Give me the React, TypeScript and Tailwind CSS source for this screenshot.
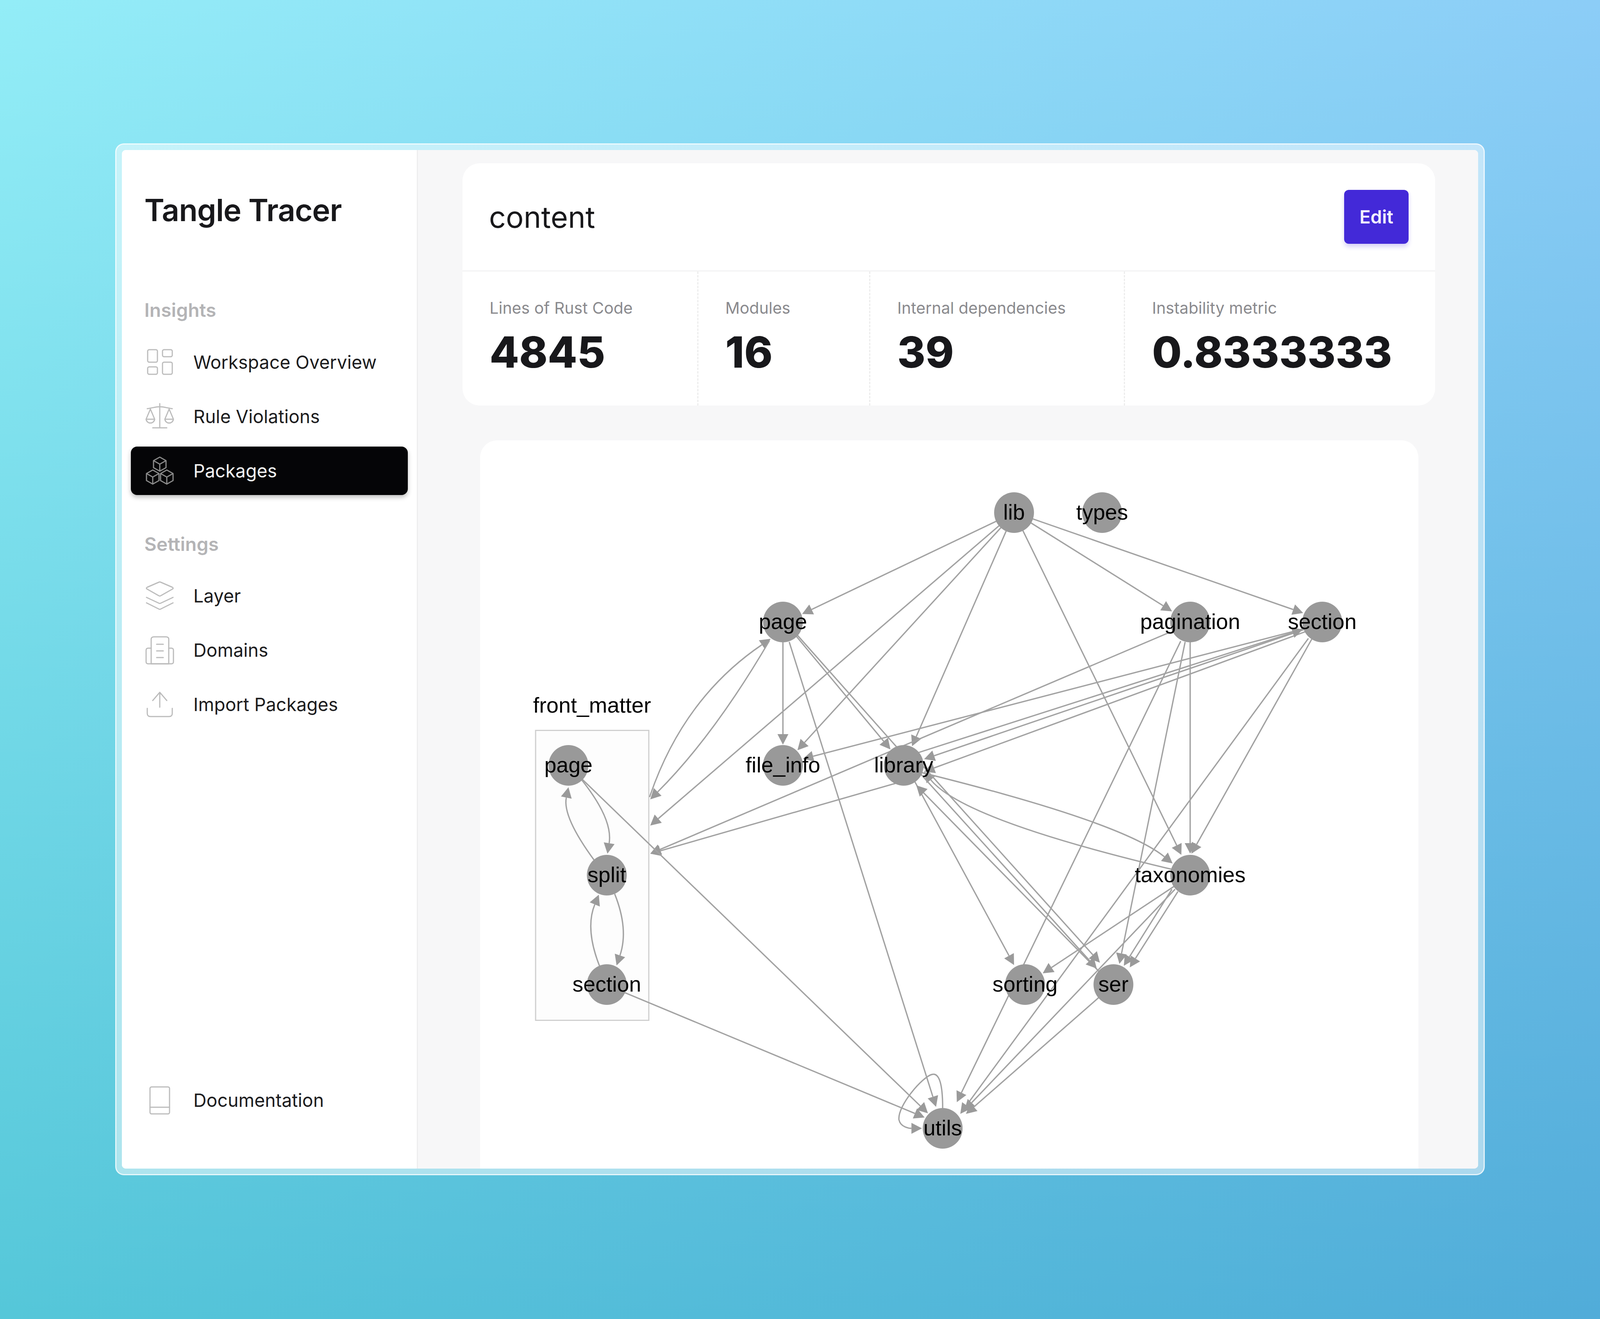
import React, { useState } from "react";

type EdgeDef = { p: number[]; arrow?: boolean };

const GRAY_LINE = "#a2a2a2";
const GRAY_HEAD = "#9a9a9a";

const edges: EdgeDef[] = [
  { p: [3170, 1332, 2538, 1575] },
  { p: [3180, 1341, 2064, 2113] },
  { p: [3182, 1348, 2528, 1924] },
  { p: [3196, 1359, 2896, 1911] },
  { p: [3249, 1358, 3753, 2188] },
  { p: [3268, 1335, 3732, 1569] },
  { p: [3273, 1326, 4151, 1572] },
  { p: [2486, 1644, 2486, 1907] },
  { p: [2528, 1628, 2832, 1922] },
  { p: [2530, 1624, 2850, 1914], arrow: false },
  { p: [2506, 1643, 2973, 2833] },
  { p: [2062, 2040, 2212, 1812, 2449, 1634] },
  { p: [2443, 1640, 2260, 1863, 2064, 2046] },
  { p: [2844, 2005, 2064, 2185] },
  { p: [3717, 1618, 2064, 2185] },
  { p: [4148, 1608, 2547, 1943] },
  { p: [4148, 1610, 2935, 1943] },
  { p: [4150, 1616, 2935, 1975] },
  { p: [2910, 1928, 4151, 1608] },
  { p: [4169, 1634, 3785, 2185] },
  { p: [4157, 1634, 3050, 2851] },
  { p: [3781, 1644, 3781, 2185] },
  { p: [3751, 1641, 3039, 2821] },
  { p: [3765, 1643, 3556, 2467] },
  { p: [3733, 2267, 3307, 2494] },
  { p: [3742, 2282, 3589, 2476] },
  { p: [3723, 2276, 3570, 2472] },
  { p: [3733, 2276, 3063, 2842] },
  { p: [3733, 2227, 3197, 2100, 2935, 1975] },
  { p: [2925, 1977, 3446, 2100, 3733, 2215] },
  { p: [2905, 2000, 3221, 2470] },
  { p: [3493, 2488, 2910, 2010] },
  { p: [2925, 1982, 3484, 2479] },
  { p: [2925, 1955, 3494, 2464] },
  { p: [3492, 2552, 3068, 2851] },
  { p: [1847, 1994, 2949, 2851] },
  { p: [1978, 2539, 2939, 2861] },
  { p: [1844, 1994, 1916, 2093, 1928, 2185] },
  { p: [1887, 2203, 1815, 2100, 1804, 2015] },
  { p: [1951, 2288, 1975, 2379, 1957, 2471] },
  { p: [1903, 2473, 1879, 2379, 1901, 2289] },
];

const nodes = [
  { x: 3221, y: 1312, t: "lib" },
  { x: 3501, y: 1312, t: "types" },
  { x: 2486, y: 1592, t: "page" },
  { x: 3781, y: 1592, t: "pagination" },
  { x: 4201, y: 1592, t: "section" },
  { x: 2486, y: 1959, t: "file_info" },
  { x: 2870, y: 1959, t: "library" },
  { x: 1804, y: 1959, t: "page" },
  { x: 1926, y: 2240, t: "split" },
  { x: 1926, y: 2520, t: "section" },
  { x: 3781, y: 2240, t: "taxonomies" },
  { x: 3256, y: 2520, t: "sorting" },
  { x: 3537, y: 2520, t: "ser" },
  { x: 2994, y: 2888, t: "utils" },
];

function Edge({ p, arrow = true, k }: EdgeDef & { k: number }) {
  const X = (x: number) => (x - 1523) * k;
  const Y = (y: number) => y - 1127;
  const curved = p.length === 6;
  const sx = X(p[0]);
  const sy = Y(p[1]);
  let tx = X(p[p.length - 2]);
  let ty = Y(p[p.length - 1]);
  const cx = curved ? 2 * X(p[2]) - 0.5 * (X(p[0]) + X(p[4])) : sx;
  const cy = curved ? 2 * Y(p[3]) - 0.5 * (Y(p[1]) + Y(p[5])) : sy;
  const dx = tx - cx;
  const dy = ty - cy;
  const len = Math.hypot(dx, dy);
  const ux = dx / len;
  const uy = dy / len;
  if (arrow) {
    // keep the arrow tip on the rim of the node it points at
    for (const n of nodes) {
      const nx = X(n.x);
      const ny = Y(n.y);
      if (Math.hypot(tx - nx, ty - ny) < 90) {
        let guard = 0;
        while (Math.hypot(tx - nx, ty - ny) < 53 && guard++ < 120) {
          tx -= ux;
          ty -= uy;
        }
      }
    }
  }
  const L = arrow ? 27 : 0;
  const bx = tx - ux * L;
  const by = ty - uy * L;
  const W = 14;
  const d = curved ? `M${sx} ${sy}Q${cx} ${cy} ${bx} ${by}` : `M${sx} ${sy}L${bx} ${by}`;
  return (
    <g>
      <path d={d} fill="none" stroke={GRAY_LINE} strokeWidth={3.4} />
      {arrow && (
        <polygon
          fill={GRAY_HEAD}
          points={`${tx},${ty} ${bx - uy * W},${by + ux * W} ${bx + uy * W},${by - ux * W}`}
        />
      )}
    </g>
  );
}

function Graph() {
  const [k] = useState(() => window.innerWidth / 5088);
  const X = (x: number) => (x - 1523) * k;
  const Y = (y: number) => y - 1127;
  const loop = `M${X(2994)} ${Y(2836)}C${X(2994)} ${Y(2780)} ${X(2985)} ${Y(2745)} ${X(2960)} ${Y(2750)}C${X(2930)} ${Y(2756)} ${X(2850)} ${Y(2830)} ${X(2855)} ${Y(2866)}C${X(2860)} ${Y(2886)} ${X(2890)} ${Y(2888)} ${X(2994) - 80} ${Y(2888)}`;
  const lt = X(2994) - 53;
  return (
    <svg viewBox={`0 0 ${2983 * k} 1865`} className="block h-[1865px] w-full">
      <rect
        x={X(1699.5)}
        y={Y(1869.5)}
        width={360 * k}
        height="742"
        fill="#fdfdfd"
        stroke="#cfcfcf"
        strokeWidth="3"
      />
      <text
        x={X(1879)}
        y={Y(1824)}
        textAnchor="middle"
        className="fill-black font-['Liberation_Sans',sans-serif] text-[56px]"
      >
        front_matter
      </text>
      {edges.map((e, i) => (
        <Edge key={i} {...e} k={k} />
      ))}
      <path d={loop} fill="none" stroke={GRAY_LINE} strokeWidth={3.4} />
      <polygon
        fill={GRAY_HEAD}
        points={`${lt},${Y(2888)} ${lt - 27},${Y(2874)} ${lt - 27},${Y(2902)}`}
      />
      {nodes.map((n, i) => (
        <ellipse key={i} cx={X(n.x)} cy={Y(n.y)} rx="51" ry="52" fill="#999999" />
      ))}
      {nodes.map((n, i) => (
        <text
          key={i}
          x={X(n.x)}
          y={Y(n.y) + 18}
          textAnchor="middle"
          className="fill-black font-['Liberation_Sans',sans-serif] text-[55.5px]"
        >
          {n.t}
        </text>
      ))}
    </svg>
  );
}

const sw = {
  fill: "none",
  strokeWidth: 3,
  strokeLinecap: "round" as const,
  strokeLinejoin: "round" as const,
};

function Cube({ cx, cy }: { cx: number; cy: number }) {
  return (
    <path
      d={`M${cx} ${cy - 18}L${cx + 16} ${cy - 9}V${cy + 9}L${cx} ${cy + 18}L${cx - 16} ${cy + 9}V${cy - 9}ZM${cx - 16} ${cy - 9}L${cx} ${cy}L${cx + 16} ${cy - 9}M${cx} ${cy}V${cy + 18}`}
    />
  );
}

function Icon({ name, color = "#bcbcbc" }: { name: string; color?: string }) {
  return (
    <svg viewBox="0 0 72 74" className="h-[74px] w-[74px] shrink-0" stroke={color} {...sw}>
      {name === "overview" && (
        <>
          <rect x="5" y="5" width="25" height="32" rx="4" />
          <rect x="43" y="5" width="25" height="18" rx="4" />
          <rect x="5" y="49" width="25" height="19" rx="4" />
          <rect x="43" y="37" width="25" height="31" rx="4" />
        </>
      )}
      {name === "rules" && (
        <>
          <path d="M36 4V66M18 66H54" />
          <path d="M4 17C18 15 27 12 36 12C45 12 54 15 68 17" />
          <path d="M12 18L1 44C3 57 21 57 23 44ZM1 44H23" />
          <path d="M60 18L49 44C51 57 69 57 71 44ZM49 44H71" />
        </>
      )}
      {name === "packages" && (
        <>
          <Cube cx={36} cy={20} />
          <Cube cx={18} cy={53} />
          <Cube cx={54} cy={53} />
        </>
      )}
      {name === "layer" && (
        <>
          <path d="M34 2C35 1.6 37 1.6 38 2L68 15C71 16.5 71 18.5 68 20L38 37C37 37.5 35 37.5 34 37L4 20C1 18.5 1 16.5 4 15Z" />
          <path d="M2 41L34 56C35 56.5 37 56.5 38 56L70 41" />
          <path d="M2 55L34 71C35 71.5 37 71.5 38 71L70 55" />
        </>
      )}
      {name === "domains" && (
        <>
          <path d="M14 72V9C14 5 17 3 21 3H52C56 3 59 5 59 9V72Z" />
          <path d="M14 32H6C3 32 1 34 1 37V67C1 70 3 72 6 72H66C69 72 71 70 71 67V37C71 34 69 32 66 32H59" />
          <path d="M28 22H45M28 39H45M28 56H45" />
        </>
      )}
      {name === "import" && (
        <>
          <path d="M36 6V44M18 27L36 6L54 27" />
          <path d="M4 47V60C4 65 7 68 12 68H60C65 68 68 65 68 60V47" />
        </>
      )}
      {name === "docs" && (
        <>
          <rect x="11" y="3" width="50" height="69" rx="4" />
          <path d="M11 55H61" />
        </>
      )}
    </svg>
  );
}

function NavItem({ icon, label, active }: { icon: string; label: string; active?: boolean }) {
  return (
    <div
      className={
        active
          ? "flex h-[124px] items-center gap-[1.2vw] rounded-[16px] bg-[#050507] pl-[0.9vw] text-[#f4f4f4] shadow-[0_6px_12px_rgba(0,0,0,0.25)]"
          : "flex h-[124px] items-center gap-[1.2vw] rounded-[16px] pl-[0.9vw] text-[#1c1c1e]"
      }
    >
      <Icon name={icon} color={active ? "#8b8b8b" : "#bcbcbc"} />
      <span className="text-[46.5px] leading-none">{label}</span>
    </div>
  );
}

function Stat({ label, value, w, first }: { label: string; value: string; w: string; first?: boolean }) {
  return (
    <div
      className={
        (first ? "" : "border-l-[3px] border-dashed border-[#ececec] ") +
        w +
        " flex flex-col justify-center pb-[18px] pl-[1.69vw]"
      }
    >
      <div className="text-[41px] leading-[60px] text-[#8a8a8e]">{label}</div>
      <div className="mt-[26px] text-[110px] leading-[114px] font-extrabold text-[#18181b]">{value}</div>
    </div>
  );
}

export default function App() {
  return (
    <div className="h-[3376px] w-full overflow-hidden bg-[linear-gradient(to_bottom,#ffffff,#93d6e0),linear-gradient(to_right,#93edf7,#8ccdf7)] pt-[367px] pl-[7.213vw] font-[Inter,sans-serif] [background-blend-mode:multiply]">
      <div className="h-[2641px] w-[85.59vw] overflow-hidden rounded-[22px] border-[3px] border-white/70 bg-white/50 p-[14px]">
        <div className="flex h-full overflow-hidden rounded-[10px] bg-white">
          <aside className="flex w-[18.49vw] shrink-0 flex-col border-r-[3px] border-[#eeeeef] bg-white px-[0.55vw] pt-[104px] pb-[113px]">
            <h1 className="h-[100px] pl-[0.845vw] text-[78px] leading-[100px] font-semibold tracking-[-1px] text-[#18181b]">
              Tangle Tracer
            </h1>
            <div className="mt-[176px] h-[60px] pl-[0.845vw] text-[48px] leading-[60px] font-semibold text-[#b4b4b6]">
              Insights
            </div>
            <nav className="mt-[41px] flex flex-col gap-[15px]">
              <NavItem icon="overview" label="Workspace Overview" />
              <NavItem icon="rules" label="Rule Violations" />
              <NavItem icon="packages" label="Packages" active />
            </nav>
            <div className="mt-[96px] h-[60px] pl-[0.845vw] text-[48px] leading-[60px] font-semibold text-[#b4b4b6]">
              Settings
            </div>
            <nav className="mt-[40px] flex flex-col gap-[15px]">
              <NavItem icon="layer" label="Layer" />
              <NavItem icon="domains" label="Domains" />
              <NavItem icon="import" label="Import Packages" />
            </nav>
            <div className="mt-auto">
              <NavItem icon="docs" label="Documentation" />
            </div>
          </aside>
          <main className="flex min-w-0 flex-1 flex-col bg-[#f7f7f8] pt-[34px]">
            <section className="ml-[2.79vw] flex h-[620px] w-[60.79vw] shrink-0 flex-col rounded-[44px] bg-white">
              <div className="flex h-[277px] shrink-0 items-center justify-between border-b-[3px] border-[#f3f3f4] px-[1.65vw]">
                <h2 className="text-[76px] leading-none text-[#18181b]">content</h2>
                <button className="flex h-[138px] w-[4.05vw] items-center justify-center rounded-[12px] bg-[#4329d8] text-[47px] font-semibold text-[#f2f0ff] shadow-[0_8px_12px_rgba(67,41,216,0.2)]">
                  Edit
                </button>
              </div>
              <div className="flex flex-1">
                <Stat first label="Lines of Rust Code" value="4845" w="w-[14.66vw]" />
                <Stat label="Modules" value="16" w="w-[10.75vw]" />
                <Stat label="Internal dependencies" value="39" w="w-[15.92vw]" />
                <Stat label="Instability metric" value="0.8333333" w="flex-1" />
              </div>
            </section>
            <section className="mt-[89px] ml-[3.89vw] min-h-0 w-[58.63vw] flex-1 overflow-hidden rounded-t-[44px] bg-white">
              <Graph />
            </section>
          </main>
        </div>
      </div>
    </div>
  );
}
